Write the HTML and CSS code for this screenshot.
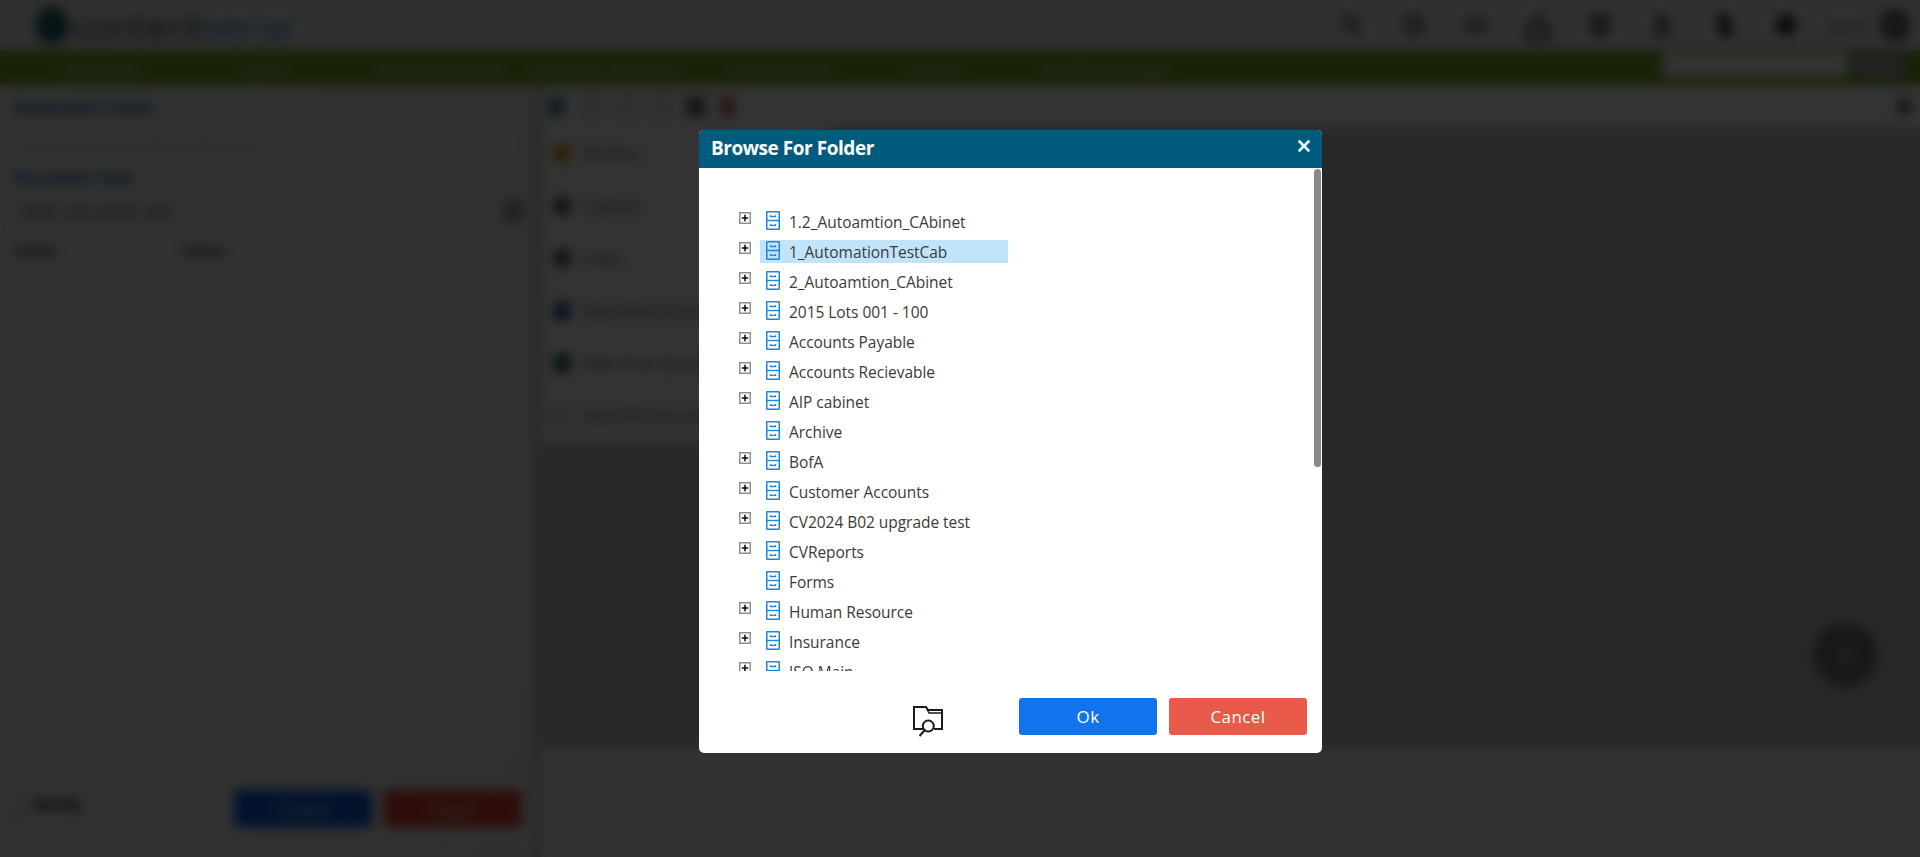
FILE: index.html
```
<!DOCTYPE html>
<html lang="en">
<head>
<meta charset="utf-8">
<title>Browse For Folder</title>
<link rel="stylesheet" href="styles.css">
</head>
<body>
<svg width="0" height="0" class="defs">
  <symbol id="cab" viewBox="0 0 14 19"><rect x=".75" y=".75" width="12.5" height="17.5" rx=".6" fill="none" stroke="#1a86dc" stroke-width="1.5"/><path d="M1 9.5h12" stroke="#1a86dc" stroke-width="1.4"/><path d="M4.500 4.200v1.300h5V4.200M4.500 13v1.300h5V13" fill="none" stroke="#2f7fc4" stroke-width="1.3"/></symbol>
  <symbol id="plus" viewBox="0 0 12 12"><rect x=".75" y=".75" width="10.5" height="10.5" fill="#fff" stroke="#8f8f8f" stroke-width="1.5"/><path d="M2.800 6h6.400M6 2.800v6.400" stroke="#111" stroke-width="1.6"/></symbol>
</svg>
<div class="app">
  <header class="top">
    <div class="logo"><span class="globe"></span><span class="content">content</span><span class="verse">verse</span></div>
    <div class="tools">
      <svg viewBox="0 0 24 24"><circle cx="10" cy="10" r="7"/><path d="M15 15l7 7"/></svg>
      <svg viewBox="0 0 24 24"><circle cx="12" cy="12" r="9"/><path d="M12 6v6h5"/></svg>
      <svg viewBox="0 0 24 24"><path d="M1 12q11-14 22 0q-11 14-22 0z"/></svg>
      <svg class="big" viewBox="0 0 24 24"><path d="M12 1v10M3 22l3-11h12l3 11z"/></svg>
      <svg viewBox="0 0 24 24"><rect x="4" y="3" width="16" height="18"/><path d="M8 8h8M8 12h8M8 16h8"/></svg>
      <svg viewBox="0 0 24 24"><circle cx="12" cy="6" r="4"/><path d="M6 22v-9h12v9z"/></svg>
      <svg viewBox="0 0 24 24"><path class="solid" d="M7 2h8v9l4 3v8H9z"/></svg>
      <svg viewBox="0 0 24 24"><circle class="solid" cx="12" cy="12" r="9"/></svg>
    </div>
    <span class="user">Admin</span><span class="avatar"></span>
  </header>
  <nav class="nav">
    <span>Documents</span><span>Search</span><span>Recent Documents</span><span>Document Templates</span><span>Administration</span><span>Reports</span><span>Workflow Manager</span>
    <div class="search"></div><div class="go"></div>
  </nav>
  <div class="main">
    <aside class="left">
      <h2>Destination Folder</h2>
      <div class="field pale">Select destination folder location</div>
      <h2>Document Type</h2>
      <div class="field type"><span>Select document type</span><i></i></div>
      <div class="cols"><b>Index</b><b>Value</b></div>
      <div class="actions"><span class="check"></span><b>Notify</b><button class="btn blue">Create</button><button class="btn red">Clear</button></div>
    </aside>
    <section class="right">
      <div class="toolbar"><i class="c1"></i><i class="c2"></i><i class="c2"></i><i class="c2"></i><i class="c3"></i><i class="c4"></i><i class="end"></i></div>
      <div class="menu">
        <div><i class="m1"></i>Browse...</div><div><i class="m2"></i>Capture</div><div><i class="m2"></i>Copy...</div><div><i class="m4"></i>New Word Document</div><div><i class="m5"></i>New Excel Spreadsheet</div><div><i class="m6"></i>New PDF Document</div>
      </div>
      <div class="status"></div>
    </section>
  </div>
  <div class="fab"></div>
</div>
<div class="scrim">
  <div class="dialog">
    <div class="head"><span>Browse For Folder</span><svg width="12" height="12" viewBox="0 0 12 12"><path d="M1.500 1.500l9 9M10.500 1.500l-9 9" stroke="#e6f6fb" stroke-width="2.700" stroke-linecap="round"/></svg></div>
    <div class="body">
      <ul class="tree">
        <li><svg class="p"><use href="#plus"/></svg><a><svg class="c"><use href="#cab"/></svg>1.2_Autoamtion_CAbinet</a></li>
        <li><svg class="p"><use href="#plus"/></svg><a class="sel"><svg class="c"><use href="#cab"/></svg>1_AutomationTestCab</a></li>
        <li><svg class="p"><use href="#plus"/></svg><a><svg class="c"><use href="#cab"/></svg>2_Autoamtion_CAbinet</a></li>
        <li><svg class="p"><use href="#plus"/></svg><a><svg class="c"><use href="#cab"/></svg>2015 Lots 001 - 100</a></li>
        <li><svg class="p"><use href="#plus"/></svg><a><svg class="c"><use href="#cab"/></svg>Accounts Payable</a></li>
        <li><svg class="p"><use href="#plus"/></svg><a><svg class="c"><use href="#cab"/></svg>Accounts Recievable</a></li>
        <li><svg class="p"><use href="#plus"/></svg><a><svg class="c"><use href="#cab"/></svg>AIP cabinet</a></li>
        <li><svg class="p"></svg><a><svg class="c"><use href="#cab"/></svg>Archive</a></li>
        <li><svg class="p"><use href="#plus"/></svg><a><svg class="c"><use href="#cab"/></svg>BofA</a></li>
        <li><svg class="p"><use href="#plus"/></svg><a><svg class="c"><use href="#cab"/></svg>Customer Accounts</a></li>
        <li><svg class="p"><use href="#plus"/></svg><a><svg class="c"><use href="#cab"/></svg>CV2024 B02 upgrade test</a></li>
        <li><svg class="p"><use href="#plus"/></svg><a><svg class="c"><use href="#cab"/></svg>CVReports</a></li>
        <li><svg class="p"></svg><a><svg class="c"><use href="#cab"/></svg>Forms</a></li>
        <li><svg class="p"><use href="#plus"/></svg><a><svg class="c"><use href="#cab"/></svg>Human Resource</a></li>
        <li><svg class="p"><use href="#plus"/></svg><a><svg class="c"><use href="#cab"/></svg>Insurance</a></li>
        <li><svg class="p"><use href="#plus"/></svg><a><svg class="c"><use href="#cab"/></svg>ISO Main</a></li>
      </ul>
      <div class="thumb"></div>
    </div>
    <div class="foot">
      <svg class="find" width="32" height="32" viewBox="0 0 32 32" fill="none" stroke="#1c1c1c" stroke-width="2"><path d="M11 24H2V2h12l2 3h14v19h-8"/><path d="M15 4l2 4h13" stroke-width="1.4"/><circle cx="16.3" cy="21" r="5.5"/><path d="M12.500 25.500L7.500 31"/></svg>
      <button class="btn ok">Ok</button><button class="btn cancel">Cancel</button>
    </div>
  </div>
</div>
</body>
</html>
```
FILE: styles.css
```
* { box-sizing: border-box; }
body { margin: 0; height: 857px; overflow: hidden; font-family: "Open Sans", "Noto Sans", sans-serif; background: #333; }
.defs { position: absolute; }
.app { height: 857px; display: flex; flex-direction: column; background: #f2f2f2; font-size: 15.500px; color: #444; }
.top { height: 50px; display: flex; align-items: center; padding-right: 11px; background: #f0f0f0; }
.logo { display: flex; align-items: center; padding-left: 35px; font-size: 37px; flex: 1; height: 50px; letter-spacing: -.5px; }
.globe { width: 34px; height: 38px; border-radius: 50%; background: linear-gradient(#3a8a3c, #1d5f80 55%); margin-right: 4px; }
.content { color: #555; }
.verse { color: #2d9bd8; }
.tools { display: flex; gap: 38px; margin-right: 28px; }
.tools svg { width: 24px; height: 26px; fill: none; stroke: #333; stroke-width: 3; }
.tools .big { width: 30px; height: 34px; margin: -4px -3px; }
.tools .solid { fill: #333; }
.user { width: 48px; font-size: 15px; margin-right: 7px; }
.avatar { width: 28px; height: 30px; border-radius: 50%; background: #888; border: 5px solid #333; }
.nav { height: 35px; background: #75ab25; display: flex; align-items: center; padding: 0 15px 0 60px; color: #e6f0d4; font-size: 15px; white-space: nowrap; }
.nav span:nth-child(1) { width: 180px; }
.nav span:nth-child(2) { width: 135px; }
.nav span:nth-child(3) { width: 155px; }
.nav span:nth-child(4) { width: 200px; }
.nav span:nth-child(5) { width: 178px; }
.nav span:nth-child(6) { width: 132px; }
.search { margin: 0 0 5px auto; width: 185px; height: 24px; background: #fff; }
.go { width: 52px; height: 24px; margin: 0 0 3px 5px; background: #aaa; border: 1px solid #777; }
.main { flex: 1; display: flex; min-height: 0; }
.left { width: 541px; border-right: 8px solid #c9c9bd; padding: 11px 10px 30px 12px; display: flex; flex-direction: column; background: linear-gradient(135deg, #f7f7f7, #eef1f0); }
.left h2 { margin: 0; font-size: 16px; line-height: 24px; color: #1558b8; letter-spacing: -.3px; }
.field { height: 33px; margin: 8px 0 4px; padding: 0 6px; background: #f8f8f8; border: 1px solid #e4e4e4; display: flex; justify-content: space-between; align-items: center; color: #444; }
.field.pale { color: #bbb; }
.field.type { margin: 5px 0 2px; padding-right: 0; }
.field i { width: 18px; height: 18px; border: 4px solid #555; }
.cols { display: grid; grid-template-columns: 168px 1fr; margin-top: 4px; line-height: 34px; background: #f9f9f9; padding-left: 2px; }
.actions { margin-top: auto; display: flex; align-items: center; }
.check { width: 13px; height: 13px; margin-right: 8px; border: 1px solid #999; }
.actions b { color: #111; width: 201px; margin-top: -9px; }
.btn { width: 138px; height: 37px; border: 0; border-radius: 3px; color: #fff; font: 17px "Open Sans", "Noto Sans", sans-serif; letter-spacing: .4px; padding: 0; }
.blue { background: #0a5be0; margin-right: 12px; }
.red { background: #e34230; }
.right { flex: 1; background: #c8c8c8; display: flex; flex-direction: column; }
.toolbar { height: 42px; background: #fdfdfd; display: flex; align-items: center; padding: 0 9px 0 7px; gap: 17px; }
.toolbar i { width: 17px; height: 19px; border: 2px solid #999; }
.toolbar .c1 { background: #5585b8; border: 0; margin-right: 3px; }
.toolbar .c3 { background: #666; border-color: #444; }
.toolbar .c4 { background: #c9604c; border: 0; width: 13px; }
.toolbar .end { margin-left: auto; background: #444; width: 13px; height: 15px; }
.menu { width: 287px; height: 315px; background: #fff; display: grid; grid-template-rows: repeat(6, 52.500px); color: #444; }
.menu div { display: flex; align-items: center; gap: 13px; padding-left: 13px; }
.menu i { width: 16px; height: 18px; }
.m1 { background: #d8952c; }
.m2 { background: #555; border-radius: 6px; }
.m4 { background: #2a4a90; }
.m5 { background: #1c6a38; }
.m6 { border: 2px solid #b88; }
.status { margin-top: auto; height: 109px; background: #fafaf5; }
.fab { position: absolute; left: 1813px; top: 623px; width: 64px; height: 64px; border-radius: 50%; background: #aaa; border: 24px solid #777; }
.scrim { position: fixed; inset: 0; background: rgba(0, 0, 0, .8); backdrop-filter: blur(6px); display: flex; justify-content: center; align-items: flex-start; padding: 130px 0 0 101px; }
.dialog { width: 623px; height: 623px; border-radius: 5px; overflow: hidden; background: #fff; display: flex; flex-direction: column; }
.head { height: 38px; background: #005b7e; color: #fff; display: flex; justify-content: space-between; padding: 4px 12px 0 12px; font-weight: 700; font-size: 19px; line-height: 29px; letter-spacing: -.46px; }
.head svg { margin-top: 6px; }
.body { height: 503px; display: flex; justify-content: space-between; overflow: hidden; padding: 42px 1px 0 40px; }
.tree { list-style: none; margin: 0; padding: 0; font-size: 15.500px; letter-spacing: -.04px; color: #3a3a3a; white-space: nowrap; }
.tree li { height: 30px; display: flex; align-items: flex-start; }
.p { width: 12px; height: 12px; margin: 2px 9px 0 0; }
.tree a { display: flex; align-items: center; width: 248px; height: 23px; padding-left: 6px; line-height: 22px; padding-top: 1px; }
.c { width: 14px; height: 19px; margin: -3px 9px 0 0; }
.sel { background: #c2e4fb; }
.thumb { width: 7px; height: 298px; margin-top: -41px; border-radius: 4px; background: #888; }
.foot { height: 82px; display: flex; padding: 27px 15px 0 213px; }
.find { margin: 7px 75px 0 0; }
.ok { background: #1273ee; margin-right: 12px; }
.cancel { background: #e95a4b; }
```
